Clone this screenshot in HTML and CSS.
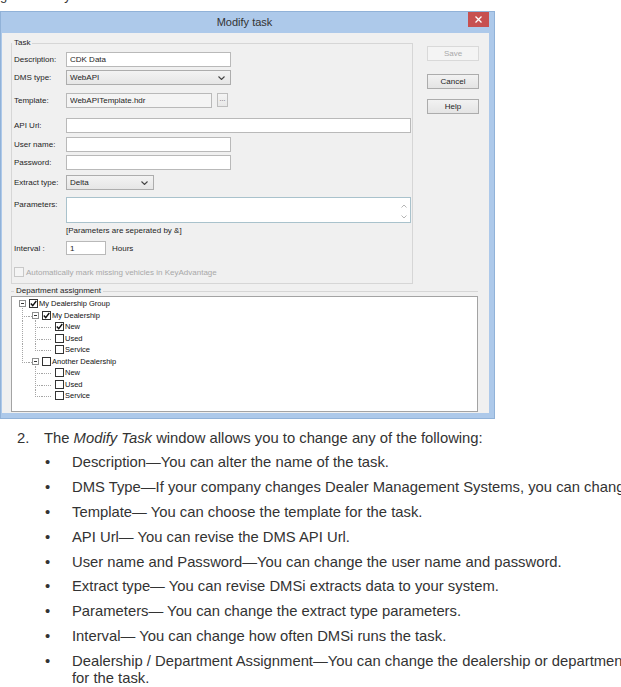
FILE: index.html
```html
<!DOCTYPE html>
<html lang="en">
<head>
  <meta charset="UTF-8">
  <title>Modify task</title>
  <link rel="stylesheet" href="styles.css">
</head>
<body>

  <div class="cut"><p>Opening the Modify task window</p></div>

  <div class="window">
    <div class="titlebar">
      <span class="title">Modify task</span>
      <span class="close">
        <svg width="7" height="7" viewBox="0 0 7 7"><path d="M0.5 0.5L6.5 6.5M6.5 0.5L0.5 6.5" stroke="#fff" stroke-width="1.3"/></svg>
      </span>
    </div>

    <div class="client">
      <fieldset class="group task">
        <legend>Task</legend>
        <div class="form">
          <label>Description:</label>
          <input class="field w165" type="text" value="CDK Data">

          <label>DMS type:</label>
          <div class="combo w165"><span>WebAPI</span><svg width="7" height="4" viewBox="0 0 7 4"><path d="M0.5 0.5L3.5 3.5L6.5 0.5" fill="none" stroke="#444" stroke-width="1.1"/></svg></div>

          <label>Template:</label>
          <div class="pick">
            <input class="field readonly w146" type="text" value="WebAPITemplate.hdr">
            <span class="dots">...</span>
          </div>

          <label>API Url:</label>
          <input class="field w345" type="text">

          <label>User name:</label>
          <input class="field w165" type="text">

          <label>Password:</label>
          <input class="field w165" type="password">

          <label>Extract type:</label>
          <div class="combo w88"><span>Delta</span><svg width="7" height="4" viewBox="0 0 7 4"><path d="M0.5 0.5L3.5 3.5L6.5 0.5" fill="none" stroke="#444" stroke-width="1.1"/></svg></div>

          <label>Parameters:</label>
          <div class="textarea w345">
            <div class="scroll">
              <svg width="6" height="4" viewBox="0 0 6 4"><path d="M0.5 3.5L3 1L5.5 3.5" fill="none" stroke="#b5b5b5"/></svg>
              <svg width="6" height="4" viewBox="0 0 6 4"><path d="M0.5 0.5L3 3L5.5 0.5" fill="none" stroke="#b5b5b5"/></svg>
            </div>
          </div>

          <span></span>
          <span class="hint">[Parameters are seperated by &amp;]</span>

          <label>Interval :</label>
          <div class="interval">
            <input class="field small w40" type="text" value="1">
            <span>Hours</span>
          </div>

          <div class="auto">
            <span class="cb-off"></span>
            <span>Automatically mark missing vehicles in KeyAdvantage</span>
          </div>
        </div>
      </fieldset>

      <div class="buttons">
        <button class="btn save" disabled>Save</button>
        <button class="btn cancel">Cancel</button>
        <button class="btn help">Help</button>
      </div>

      <fieldset class="dept">
        <legend>Department assignment</legend>
        <div class="tree">
          <div class="node">
            <span class="cell exp down"><svg width="7" height="7" viewBox="0 0 7 7"><rect x="0.5" y="0.5" width="6" height="6" fill="#fff" stroke="#8e8f8f"/><path d="M2 3.5H5" stroke="#333"/></svg></span>
            <span class="cb on"><svg width="7" height="7" viewBox="0 0 7 7"><path d="M0.8 3.6L2.7 5.6L6.3 1" fill="none" stroke="#111" stroke-width="1.4"/></svg></span>
            <span class="txt">My Dealership Group</span>
          </div>
          <div class="node">
            <span class="cell tee"></span>
            <span class="cell exp down left"><svg width="7" height="7" viewBox="0 0 7 7"><rect x="0.5" y="0.5" width="6" height="6" fill="#fff" stroke="#8e8f8f"/><path d="M2 3.5H5" stroke="#333"/></svg></span>
            <span class="cb on"><svg width="7" height="7" viewBox="0 0 7 7"><path d="M0.8 3.6L2.7 5.6L6.3 1" fill="none" stroke="#111" stroke-width="1.4"/></svg></span>
            <span class="txt">My Dealership</span>
          </div>
          <div class="node">
            <span class="cell vline"></span>
            <span class="cell tee"></span>
            <span class="cell hline"></span>
            <span class="cb on"><svg width="7" height="7" viewBox="0 0 7 7"><path d="M0.8 3.6L2.7 5.6L6.3 1" fill="none" stroke="#111" stroke-width="1.4"/></svg></span>
            <span class="txt">New</span>
          </div>
          <div class="node">
            <span class="cell vline"></span>
            <span class="cell tee"></span>
            <span class="cell hline"></span>
            <span class="cb"></span>
            <span class="txt">Used</span>
          </div>
          <div class="node">
            <span class="cell vline"></span>
            <span class="cell elbow"></span>
            <span class="cell hline"></span>
            <span class="cb"></span>
            <span class="txt">Service</span>
          </div>
          <div class="node">
            <span class="cell elbow"></span>
            <span class="cell exp down left"><svg width="7" height="7" viewBox="0 0 7 7"><rect x="0.5" y="0.5" width="6" height="6" fill="#fff" stroke="#8e8f8f"/><path d="M2 3.5H5" stroke="#333"/></svg></span>
            <span class="cb"></span>
            <span class="txt">Another Dealership</span>
          </div>
          <div class="node">
            <span class="cell"></span>
            <span class="cell tee"></span>
            <span class="cell hline"></span>
            <span class="cb"></span>
            <span class="txt">New</span>
          </div>
          <div class="node">
            <span class="cell"></span>
            <span class="cell tee"></span>
            <span class="cell hline"></span>
            <span class="cb"></span>
            <span class="txt">Used</span>
          </div>
          <div class="node">
            <span class="cell"></span>
            <span class="cell elbow"></span>
            <span class="cell hline"></span>
            <span class="cb"></span>
            <span class="txt">Service</span>
          </div>
        </div>
      </fieldset>
    </div>
  </div>

  <div class="doc">
    <span class="num">2.</span>
    <div class="step">
      <p>The <em>Modify Task</em> window allows you to change any of the following:</p>
      <ul>
        <li><span class="dot">•</span><span class="txt">Description—You can alter the name of the task.</span></li>
        <li><span class="dot">•</span><span class="txt nowrap">DMS Type—If your company changes Dealer Management Systems, you can change it.</span></li>
        <li><span class="dot">•</span><span class="txt">Template— You can choose the template for the task.</span></li>
        <li><span class="dot">•</span><span class="txt">API Url— You can revise the DMS API Url.</span></li>
        <li><span class="dot">•</span><span class="txt">User name and Password—You can change the user name and password.</span></li>
        <li><span class="dot">•</span><span class="txt">Extract type— You can revise DMSi extracts data to your system.</span></li>
        <li><span class="dot">•</span><span class="txt">Parameters— You can change the extract type parameters.</span></li>
        <li><span class="dot">•</span><span class="txt">Interval— You can change how often DMSi runs the task.</span></li>
        <li><span class="dot">•</span><span class="txt">Dealership / Department Assignment—You can change the dealership or department for the task.</span></li>
      </ul>
    </div>
  </div>

</body>
</html>
```

FILE: styles.css
```css
body {
  margin: 0;
  background: #fff;
  overflow: hidden;
  font-family: "Liberation Sans", Arial, sans-serif;
}

/* tail of the line above the figure */
.cut {
  height: 5px;
  overflow: hidden;
}
.cut p {
  margin: -12.5px 0 0 -42px;
  font-size: 13px;
  line-height: 15px;
  color: #333;
  white-space: nowrap;
}

/* dialog window */
.window {
  margin-top: 6px;
  width: 495px;
  box-sizing: border-box;
  background: #adc9ea;
  border: 1px solid #91b2d8;
  padding: 0 5px 5px 1px;
}
.titlebar {
  display: flex;
  align-items: flex-start;
  height: 21px;
}
.title {
  flex: 1;
  text-align: center;
  padding-left: 19px;
  font-size: 11px;
  line-height: 21px;
  color: #333;
}
.close {
  width: 21px;
  height: 15px;
  background: #c75050;
  display: flex;
  align-items: center;
  justify-content: center;
}

.client {
  background: #f0f0f0;
  padding: 5px 10px 1px 9px;
  display: grid;
  grid-template-columns: 402px 52px;
  column-gap: 14px;
  row-gap: 2px;
  align-items: start;
  font-size: 8px;
  color: #1e1e1e;
}

fieldset {
  margin: 0;
  padding: 0;
  min-width: 0;
}
legend {
  padding: 0 2px;
  font-size: 8px;
  line-height: 10px;
  color: #1e1e1e;
}
.task {
  border: 1px solid #d6d6d6;
}

.form {
  display: grid;
  grid-template-columns: 54px 1fr;
  grid-template-rows: 18px 23px 25px 19px 18px 20px 22px 29px 15px 26px 16px;
  align-items: start;
  padding-top: 4px;
}
.form label {
  padding: 3px 0 0 2px;
  line-height: 9px;
  white-space: nowrap;
}

.field {
  display: block;
  box-sizing: border-box;
  height: 15px;
  margin: 0;
  padding: 0 3px;
  border: 1px solid #b9b9b9;
  background: #fff;
  font-family: "Liberation Sans", Arial, sans-serif;
  font-size: 8px;
  color: #1e1e1e;
  outline: none;
}
.readonly {
  background: #f4f4f4;
}
.small {
  height: 14px;
}
.w40 { width: 40px; }
.w88 { width: 88px; }
.w146 { width: 146px; }
.w165 { width: 165px; }
.w345 { width: 345px; }

.combo {
  box-sizing: border-box;
  height: 15px;
  padding: 0 5px 0 3px;
  border: 1px solid #adadad;
  background: linear-gradient(#f3f3f3, #e6e6e6);
  display: flex;
  align-items: center;
  justify-content: space-between;
  line-height: 9px;
}

.pick {
  display: flex;
  gap: 5px;
}
.dots {
  box-sizing: border-box;
  width: 11px;
  height: 14px;
  border: 1px solid #bdbdbd;
  background: linear-gradient(#f4f4f4, #e8e8e8);
  font-size: 7px;
  line-height: 9px;
  text-align: center;
  color: #555;
}

.textarea {
  box-sizing: border-box;
  height: 26px;
  border: 1px solid #a9c2cc;
  background: #fff;
  display: flex;
  justify-content: flex-end;
}
.scroll {
  width: 12px;
  display: flex;
  flex-direction: column;
  align-items: center;
  justify-content: space-between;
  padding: 6px 0 3px;
}

.hint {
  line-height: 9px;
}

.interval {
  display: flex;
  align-items: center;
  gap: 6px;
}

.auto {
  grid-column: 1 / -1;
  display: flex;
  align-items: center;
  gap: 2px;
  padding-left: 2px;
  color: #a8a8a8;
}
.cb-off {
  box-sizing: border-box;
  width: 10px;
  height: 10px;
  border: 1px solid #c8c8c8;
  background: #f4f4f4;
}

/* right column buttons */
.buttons {
  display: flex;
  flex-direction: column;
}
.btn {
  box-sizing: border-box;
  width: 52px;
  height: 15px;
  padding: 0;
  border: 1px solid #acacac;
  background: linear-gradient(#f2f2f2, #e4e4e4);
  font-family: "Liberation Sans", Arial, sans-serif;
  font-size: 8px;
  color: #1e1e1e;
}
.save {
  margin-top: 8px;
  border-color: #d9d9d9;
  background: #f4f4f4;
  color: #a9a9a9;
}
.cancel {
  margin-top: 13px;
}
.help {
  margin-top: 10px;
}

/* department tree */
.dept {
  grid-column: 1 / -1;
  width: 467px;
  border: 0;
  border-top: 1px solid #d6d6d6;
}
.dept legend {
  margin-left: 3px;
}
.tree {
  box-sizing: border-box;
  height: 116px;
  border: 1px solid #a3a3a3;
  background: #fff;
  padding: 1px 0 0 4px;
  font-size: 7.5px;
}
.node {
  display: flex;
  align-items: center;
  height: 11.5px;
}
.cell {
  width: 13px;
  height: 100%;
  flex: none;
}
.exp {
  display: flex;
  align-items: center;
  justify-content: center;
}
.exp svg {
  display: block;
}
.vline {
  background: repeating-linear-gradient(to bottom, #a5a5a5 0 1px, transparent 1px 2px) 6px 0 / 1px 100% no-repeat;
}
.tee {
  background:
    repeating-linear-gradient(to bottom, #a5a5a5 0 1px, transparent 1px 2px) 6px 0 / 1px 100% no-repeat,
    repeating-linear-gradient(to right, #a5a5a5 0 1px, transparent 1px 2px) 6px 6px / 7px 1px no-repeat;
}
.elbow {
  background:
    repeating-linear-gradient(to bottom, #a5a5a5 0 1px, transparent 1px 2px) 6px 0 / 1px 6px no-repeat,
    repeating-linear-gradient(to right, #a5a5a5 0 1px, transparent 1px 2px) 6px 6px / 7px 1px no-repeat;
}
.hline {
  background: repeating-linear-gradient(to right, #a5a5a5 0 1px, transparent 1px 2px) 0 6px / 10px 1px no-repeat;
}
.down {
  background: repeating-linear-gradient(to bottom, #a5a5a5 0 1px, transparent 1px 2px) 6px 6px / 1px 6px no-repeat;
}
.down.left {
  background:
    repeating-linear-gradient(to bottom, #a5a5a5 0 1px, transparent 1px 2px) 6px 6px / 1px 6px no-repeat,
    repeating-linear-gradient(to right, #a5a5a5 0 1px, transparent 1px 2px) 0 6px / 6px 1px no-repeat;
}
.cb {
  box-sizing: border-box;
  width: 9px;
  height: 9px;
  flex: none;
  border: 1px solid #333;
  background: #fff;
  display: flex;
  align-items: center;
  justify-content: center;
}
.cb svg {
  display: block;
}
.node .txt {
  padding-left: 1px;
  white-space: nowrap;
  color: #111;
}

/* document text under the figure */
.doc {
  display: flex;
  margin-top: 10.7px;
  padding-left: 17px;
  font-size: 14.8px;
  line-height: 17.5px;
  color: #333;
}
.num {
  width: 27px;
  flex: none;
}
.step p {
  margin: 0;
  white-space: nowrap;
}
.step ul {
  margin: 0;
  padding: 0;
  list-style: none;
}
.step li {
  display: flex;
  margin-top: 7.3px;
}
.dot {
  width: 27px;
  padding-left: 1px;
  flex: none;
}
.step .txt {
  width: 570px;
  flex: none;
}
.nowrap {
  white-space: nowrap;
}
```
